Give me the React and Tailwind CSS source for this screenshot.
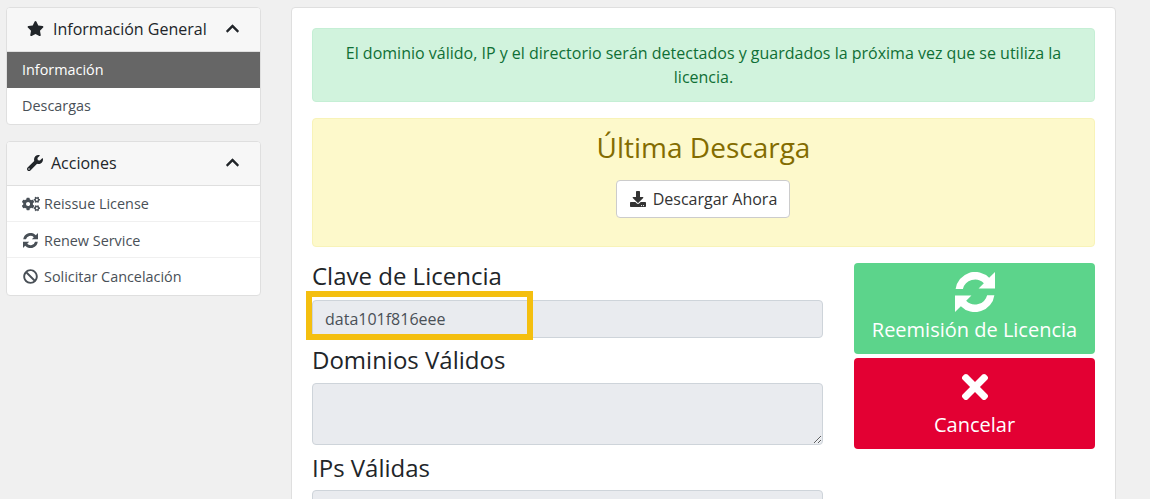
import React from "react";
import { FaStar, FaWrench, FaCogs, FaBan, FaTimes, FaDownload, FaChevronUp } from "react-icons/fa";

// sync arrows with square corners, the icon package only has rounded ones
const SyncIcon = ({ className = "" }) => {
  const arc = "M8 216A251 251 0 0 1 437 75L512 0V210H302L369 143A160 160 0 0 0 101 216Z";
  return (
    <svg viewBox="0 0 512 512" fill="currentColor" className={className}>
      <path d={arc} />
      <path d={arc} transform="rotate(180 256 256)" />
    </svg>
  );
};

const SidePanel = ({ icon, title, gap, children }) => (
  <div className="w-full bg-white rounded border border-[#dfdfdf] overflow-hidden">
    <div className="h-[44px] flex items-center justify-between pl-[20px] pr-[20px] pb-[2px] bg-[#f7f7f7] border-b border-[#dfdfdf] text-[16px] text-[#212529]">
      <span className={`flex items-center ${gap}`}>
        {icon}
        {title}
      </span>
      <FaChevronUp className="text-[15px]" />
    </div>
    {children}
  </div>
);

const Heading = ({ children, className = "" }) => (
  <h3 className={`text-[24px] leading-[26px] text-[#212529] ${className}`}>{children}</h3>
);

const App = () => {
  return (
    <div
      className="h-[499px] overflow-hidden bg-[#f0f0f0] flex items-start pl-[6px]"
      style={{ fontFamily: '"Open Sans", sans-serif' }}
    >
      <aside className="w-[255px] pt-[7px] flex flex-col gap-[16px] shrink-0">
        <SidePanel icon={<FaStar className="text-[17px]" />} title="Información General" gap="gap-[9px]">
          <div className="h-[36px] flex items-center px-[15px] bg-[#666666] text-white text-[14.4px]">Información</div>
          <div className="h-[36px] flex items-center px-[15px] text-[#495057] text-[14.4px]">Descargas</div>
        </SidePanel>
        <SidePanel icon={<FaWrench className="text-[16px]" />} title="Acciones" gap="gap-[8px]">
          <div className="h-[36px] flex items-center gap-[4px] px-[15px] border-b border-[#f0f0f0] text-[#495057] text-[14.4px]">
            <FaCogs className="text-[18px] w-[18px]" />
            Reissue License
          </div>
          <div className="h-[36px] pt-[2px] flex items-center gap-[6px] px-[16px] border-b border-[#f0f0f0] text-[#495057] text-[14.4px]">
            <SyncIcon className="w-[15px] h-[15px]" />
            Renew Service
          </div>
          <div className="h-[37px] flex items-center gap-[6px] px-[16px] text-[#495057] text-[14.4px]">
            <FaBan className="text-[15px]" />
            Solicitar Cancelación
          </div>
        </SidePanel>
      </aside>

      <main className="ml-[30px] mt-[7px] w-[825px] h-[600px] shrink-0 bg-white rounded border border-[#dfdfdf] px-[20px] pt-[20px]">
        <div className="h-[74px] flex items-center justify-center text-center px-[20px] bg-[#d1f3dd] border border-[#c5efd5] rounded text-[16px] leading-[24px] text-[#0f6f35]">
          El dominio válido, IP y el directorio serán detectados y guardados la próxima vez que se utiliza la licencia.
        </div>

        <div className="mt-[16px] h-[129px] flex flex-col items-center bg-[#fdf9cb] border border-[#f8f3b8] rounded pt-[10px]">
          <h2 className="text-[28px] leading-[36px] text-[#836c00]">Última Descarga</h2>
          <button className="mt-[15px] mr-[1px] pl-[1px] h-[38px] w-[174px] flex items-center justify-center gap-[7px] bg-white border border-[#cccccc] rounded text-[16px] text-[#333333]">
            <FaDownload className="text-[16px]" />
            Descargar Ahora
          </button>
        </div>

        <div className="mt-[16px] flex gap-[31px]">
          <div className="w-[511px] shrink-0">
            <Heading>Clave de Licencia</Heading>
            <div className="relative mt-[11px]">
              <div className="h-[38px] flex items-center px-[12px] bg-[#e9ebef] border border-[#ced4da] rounded text-[16px] text-[#495057]">
                data101f816eee
              </div>
              <div className="absolute left-[-6px] top-[-9px] w-[227px] h-[49px] border-[6px] border-[#f4bf0f] pointer-events-none" />
            </div>
            <Heading className="mt-[9px]">Dominios Válidos</Heading>
            <textarea
              readOnly
              className="block mt-[10px] w-full h-[62px] bg-[#e9ebef] border border-[#ced4da] rounded"
            />
            <Heading className="mt-[10px]">IPs Válidas</Heading>
            <div className="mt-[9px] h-[62px] bg-[#e9ebef] border border-[#ced4da] rounded" />
          </div>

          <div className="w-[241px] shrink-0 flex flex-col gap-[4px]">
            <button className="h-[91px] pb-[2px] flex flex-col items-center justify-center bg-[#5cd48b] rounded text-white text-[20px] leading-[26px]">
              <SyncIcon className="w-[40px] h-[40px] mb-[5px]" />
              Reemisión de Licencia
            </button>
            <button className="h-[91px] pb-[2px] flex flex-col items-center justify-center bg-[#e30033] rounded text-white text-[20px] leading-[26px]">
              <FaTimes className="text-[38px] mb-[6px]" />
              Cancelar
            </button>
          </div>
        </div>
      </main>
    </div>
  );
};

export default App;
